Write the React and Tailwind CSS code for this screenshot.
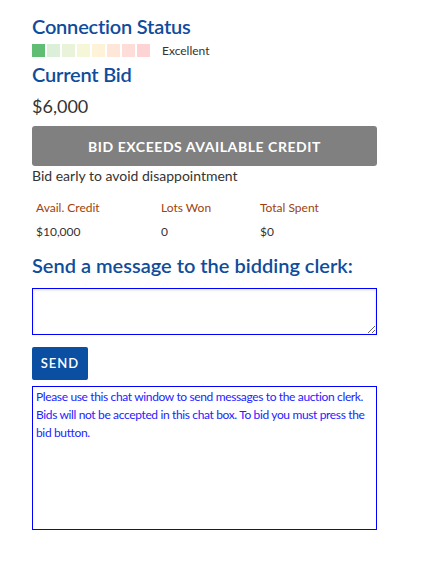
const bars = ['#5fbd74', '#dcefd9', '#e9f3d9', '#f6f7d9', '#fef3d9', '#fee6d9', '#fedcd8', '#fdd3d3'];

const stats = [
  { label: 'Avail. Credit', value: '$10,000', w: 'w-[125px]' },
  { label: 'Lots Won', value: '0', w: 'w-[99px]' },
  { label: 'Total Spent', value: '$0', w: 'w-[100px]' },
];

export default function App() {
  return (
    <div className="min-h-[583px] bg-white px-8 pt-[14px] text-[#333] font-['Source_Sans_Pro','Lato',sans-serif]">
      <div className="w-[345px]">
        <h2 className="text-[20px] leading-[24px] font-semibold tracking-[-0.01em] text-[#0f4c9c]">Connection Status</h2>
        <div className="mt-[6px] flex items-center">
          <div className="flex gap-[2px]">
            {bars.map((c, i) => (
              <span key={i} className="block w-[13px] h-[13px]" style={{ backgroundColor: c }} />
            ))}
          </div>
          <span className="ml-[12px] text-[12px] leading-[13px]">Excellent</span>
        </div>
        <h2 className="mt-[5px] text-[20px] leading-[24px] font-semibold tracking-[-0.01em] text-[#0f4c9c]">Current Bid</h2>
        <div className="mt-[9px] text-[18px] leading-[22px]">$6,000</div>
        <button
          type="button"
          className="mt-[9px] w-full h-[40px] rounded-[3px] bg-[#808080] text-white text-[14px] font-bold tracking-[0.04em] uppercase"
        >
          Bid exceeds available credit
        </button>
        <p className="mt-[1px] text-[14px] leading-[18px]">Bid early to avoid disappointment</p>
        <div className="mt-[15px] flex pl-[4px] text-[12px]">
          {stats.map((s) => (
            <div key={s.label} className={s.w}>
              <div className="text-[#a0410d] leading-[16px]">{s.label}</div>
              <div className="mt-[8px] leading-[16px]">{s.value}</div>
            </div>
          ))}
        </div>
        <h2 className="mt-[13px] text-[20px] leading-[24px] font-semibold text-[#0f4c9c]">
          Send a message to the bidding clerk:
        </h2>
        <textarea className="mt-[11px] block w-full h-[47px] border border-[#0000ff] shadow-[inset_0_1px_3px_rgba(0,0,0,0.12)] outline-none" />
        <button
          type="button"
          className="mt-[12px] block w-[56px] h-[33px] rounded-[2px] bg-[#0b4fa2] text-white text-[13px] font-semibold tracking-[0.08em]"
        >
          SEND
        </button>
        <div className="mt-[6px] h-[144px] border border-[#0000ff] px-[3px] py-[1px] text-[12px] leading-[18px] tracking-[-0.03em] text-[#2323ff]">
          Please use this chat window to send messages to the auction clerk. Bids will not be accepted in this chat box. To bid you must press the bid button.
        </div>
      </div>
    </div>
  );
}
